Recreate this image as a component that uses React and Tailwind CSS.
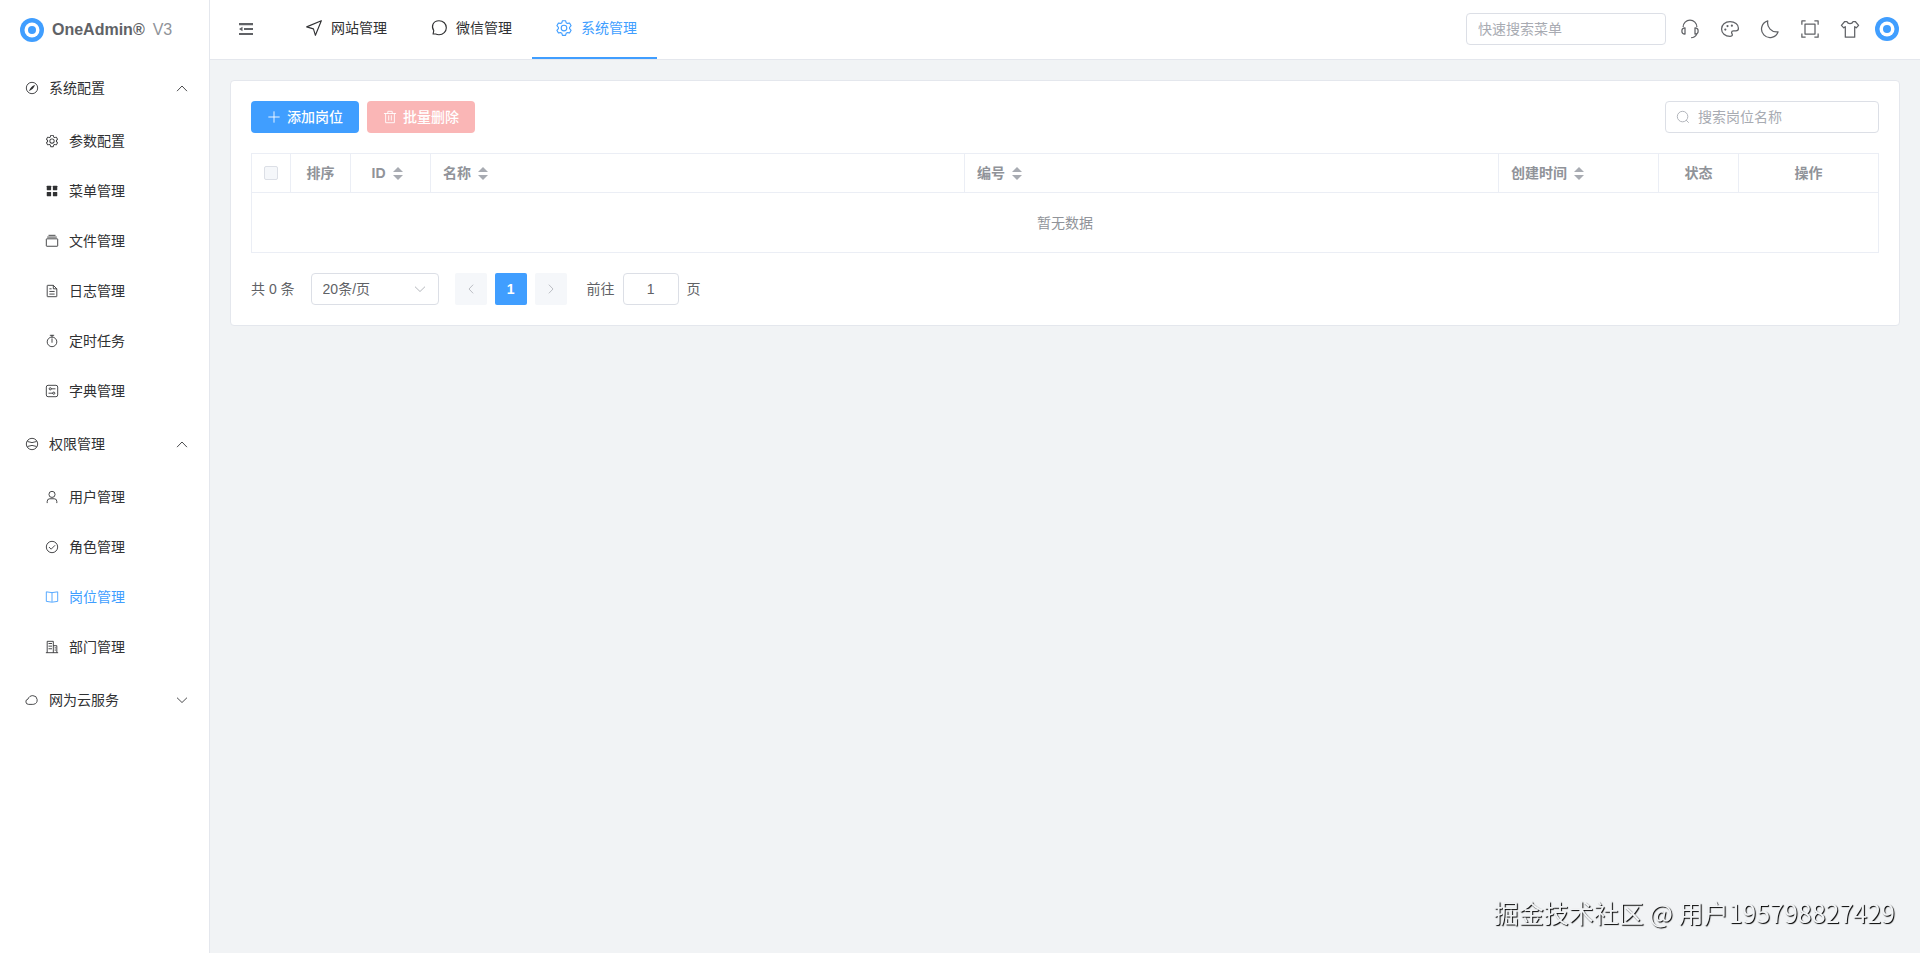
import { useState } from 'react';

function Icon({ className = 'size-3.5', children }) {
  return (
    <svg
      viewBox="0 0 1024 1024"
      className={`shrink-0 ${className}`}
      fill="none"
      stroke="currentColor"
      strokeWidth="64"
      strokeLinejoin="round"
      aria-hidden="true"
    >
      {children}
    </svg>
  );
}

const icons = {
  compass: (
    <>
      <circle cx="512" cy="512" r="416" />
      <path
        fill="currentColor"
        stroke="none"
        d="M725.9 315C676.5 428.7 624 513.3 568.6 568.6c-55.4 55.4-140 107.9-253.6 157.3a12.8 12.8 0 0 1-16.9-16.8c49.5-113.7 102-198.3 157.3-253.6 55.4-55.3 139.9-107.8 253.6-157.3a12.8 12.8 0 0 1 16.9 16.8z"
      />
    </>
  ),
  setting: (
    <path
      fill="currentColor"
      stroke="none"
      d="M600.704 64a32 32 0 0 1 30.464 22.208l35.2 109.376c14.784 7.232 28.928 15.36 42.432 24.512l112.384-24.192a32 32 0 0 1 34.432 15.36L944.32 364.8a32 32 0 0 1-4.032 37.504l-77.12 85.12a357.12 357.12 0 0 1 0 49.024l77.12 85.248a32 32 0 0 1 4.032 37.504l-88.704 153.6a32 32 0 0 1-34.432 15.296L708.8 803.904c-13.44 9.088-27.648 17.28-42.368 24.512l-35.264 109.376A32 32 0 0 1 600.704 960H423.296a32 32 0 0 1-30.464-22.208L357.696 828.48a351.616 351.616 0 0 1-42.56-24.64l-112.32 24.256a32 32 0 0 1-34.432-15.36L79.68 659.2a32 32 0 0 1 4.032-37.504l77.12-85.248a357.12 357.12 0 0 1 0-48.896l-77.12-85.248A32 32 0 0 1 79.68 364.8l88.704-153.6a32 32 0 0 1 34.432-15.296l112.32 24.256c13.568-9.152 27.776-17.408 42.56-24.64l35.2-109.312A32 32 0 0 1 423.232 64H600.64zm-23.424 64H446.72l-36.352 113.088-24.512 11.968a294.113 294.113 0 0 0-34.816 20.096l-22.656 15.36-116.224-25.088-65.28 113.152 79.68 88.192-1.92 27.136a293.12 293.12 0 0 0 0 40.192l1.92 27.136-79.808 88.192 65.344 113.152 116.224-25.024 22.656 15.296a294.113 294.113 0 0 0 34.816 20.096l24.512 11.968L446.72 896h130.688l36.48-113.152 24.448-11.904a288.282 288.282 0 0 0 34.752-20.096l22.592-15.296 116.288 25.024 65.28-113.152-79.744-88.192 1.92-27.136a293.12 293.12 0 0 0 0-40.256l-1.92-27.136 79.808-88.128-65.344-113.152-116.288 24.96-22.592-15.232a287.616 287.616 0 0 0-34.752-20.096l-24.448-11.904L577.344 128zM512 320a192 192 0 1 1 0 384 192 192 0 0 1 0-384zm0 64a128 128 0 1 0 0 256 128 128 0 0 0 0-256z"
    />
  ),
  menu: (
    <g fill="currentColor" stroke="none">
      <rect x="128" y="128" width="320" height="320" rx="32" />
      <rect x="576" y="128" width="320" height="320" rx="32" />
      <rect x="128" y="576" width="320" height="320" rx="32" />
      <rect x="576" y="576" width="320" height="320" rx="32" />
    </g>
  ),
  files: (
    <>
      <rect x="96" y="352" width="832" height="544" rx="32" />
      <path d="M160 224h704M256 96h512" />
    </>
  ),
  document: (
    <>
      <path d="M608 96H192a32 32 0 0 0-32 32v768a32 32 0 0 0 32 32h640a32 32 0 0 0 32-32V352z" />
      <path d="M608 96v256h256M320 352h160M320 544h384M320 736h384" />
    </>
  ),
  timer: (
    <>
      <circle cx="512" cy="576" r="352" />
      <path d="M512 352v256M384 96h256M512 96v128" strokeLinecap="round" />
    </>
  ),
  setUp: (
    <>
      <rect x="96" y="96" width="832" height="832" rx="128" />
      <circle cx="384" cy="352" r="80" />
      <circle cx="640" cy="672" r="80" />
      <path d="M480 352h256M288 672h256" strokeLinecap="round" />
    </>
  ),
  baseball: (
    <>
      <circle cx="512" cy="512" r="416" />
      <path d="M176 330q336 160 672 0M176 694q336-160 672 0" />
    </>
  ),
  user: (
    <>
      <circle cx="512" cy="320" r="224" />
      <path d="M160 928v-96a192 192 0 0 1 192-192h320a192 192 0 0 1 192 192v96" strokeLinecap="round" />
    </>
  ),
  check: (
    <>
      <circle cx="512" cy="512" r="416" />
      <path d="M288 512l160 160 288-288" />
    </>
  ),
  reading: (
    <path d="M512 864V192M512 192L96 134v698l416 58 416-58V134z" />
  ),
  building: (
    <path d="M160 928V96h448v832M608 416h256v512M64 928h896M256 256h256M256 448h256M256 640h256M704 576h96M704 736h96" />
  ),
  cloud: (
    <path d="M260 832a196 196 0 0 1-40-388C260 300 400 192 570 192a320 320 0 0 1 70 632c-20 6-50 8-70 8z" />
  ),
  promotion: <path d="M96 448L928 96 592 928 480 560z" />,
  chat: (
    <path d="M174 855l40-190C60 440 150 96 512 96c240 0 416 180 416 400S752 896 512 896c-70 0-130-12-190-40z" />
  ),
  headset: (
    <>
      <path d="M864 410a352 352 0 0 0-704 0M864 768a352 352 0 0 1-300 192" />
      <path d="M256 448c-107 0-160 60-160 160s53 160 160 160zM768 448c107 0 160 60 160 160s-53 160-160 160z" />
    </>
  ),
  palette: (
    <>
      <path d="M944 470C944 280 760 140 512 140S80 300 80 512s184 372 432 372c70 0 120-26 120-76 0-54-40-66-40-118 0-46 40-84 100-84h120c82 0 132-46 132-136z" />
      <g fill="currentColor" stroke="none">
        <circle cx="272" cy="540" r="56" />
        <circle cx="384" cy="360" r="56" />
        <circle cx="608" cy="340" r="56" />
      </g>
    </>
  ),
  moon: (
    <path d="M400 96a464 464 0 0 0 528 560A436 436 0 1 1 400 96z" />
  ),
  fullScreen: (
    <>
      <path d="M96 288V96h192M736 96h192v192M928 736v192H736M288 928H96V736" />
      <rect x="256" y="256" width="512" height="512" />
    </>
  ),
  shirt: (
    <path d="M352 128c30 80 90 112 160 112s130-32 160-112h110l170 196-120 130-80-60v534H272V394l-80 60L72 324l170-196z" />
  ),
  plus: <path d="M512 128v768M128 512h768" strokeLinecap="round" />,
  trash: (
    <path d="M96 256h832M352 256V96h320v160M192 256v672h640V256M416 416v320M608 416v320" strokeLinecap="round" />
  ),
  search: (
    <>
      <circle cx="480" cy="480" r="384" />
      <path d="M752 752l160 160" strokeLinecap="round" />
    </>
  ),
  up: <path d="M168 722l344-356 344 356" strokeLinecap="round" />,
  down: <path d="M168 362l344 334 344-334" strokeLinecap="round" />,
  left: <path d="M672 168L340 512l332 344" strokeLinecap="round" />,
  right: <path d="M352 168l332 344-332 344" strokeLinecap="round" />,
  fold: (
    <g fill="currentColor" stroke="none">
      <path d="M64 128h896v136H64zM384 444h576v136H384zM64 760h896v136H64zM64 512l224-150v300z" />
    </g>
  ),
};

const menus = [
  {
    title: '系统配置',
    icon: 'compass',
    children: [
      { title: '参数配置', icon: 'setting' },
      { title: '菜单管理', icon: 'menu' },
      { title: '文件管理', icon: 'files' },
      { title: '日志管理', icon: 'document' },
      { title: '定时任务', icon: 'timer' },
      { title: '字典管理', icon: 'setUp' },
    ],
  },
  {
    title: '权限管理',
    icon: 'baseball',
    children: [
      { title: '用户管理', icon: 'user' },
      { title: '角色管理', icon: 'check' },
      { title: '岗位管理', icon: 'reading' },
      { title: '部门管理', icon: 'building' },
    ],
  },
  { title: '网为云服务', icon: 'cloud', children: [] },
];

const tabs = [
  { title: '网站管理', icon: 'promotion' },
  { title: '微信管理', icon: 'chat' },
  { title: '系统管理', icon: 'setting' },
];

const tools = [
  { title: '客服', icon: 'headset' },
  { title: '主题', icon: 'palette' },
  { title: '暗黑模式', icon: 'moon' },
  { title: '全屏', icon: 'fullScreen' },
  { title: '换肤', icon: 'shirt' },
];

const columns = [
  { title: '排序', width: 'w-[60px]', center: true },
  { title: 'ID', width: 'w-20', center: true, sortable: true },
  { title: '名称', sortable: true },
  { title: '编号', sortable: true },
  { title: '创建时间', width: 'w-40', sortable: true },
  { title: '状态', width: 'w-20', center: true },
  { title: '操作', width: 'w-[140px]', center: true },
];

function Logo() {
  return (
    <svg viewBox="0 0 24 24" className="size-6 shrink-0" aria-hidden="true">
      <circle cx="12" cy="12" r="12" fill="#409eff" />
      <circle cx="12" cy="12" r="7.5" fill="#fff" />
      <circle cx="12" cy="12" r="4" fill="#409eff" />
    </svg>
  );
}

function Sidebar() {
  const [active, setActive] = useState('岗位管理');
  const [open, setOpen] = useState(['系统配置', '权限管理']);

  const toggle = (title) =>
    setOpen(open.includes(title) ? open.filter((t) => t !== title) : [...open, title]);

  return (
    <aside className="w-[210px] shrink-0 border-r border-[#e4e7ed] bg-white">
      <div className="flex h-[60px] items-center pl-5 text-base">
        <Logo />
        <span className="ml-2 font-bold text-[#606266]">OneAdmin®</span>
        <span className="ml-2 text-[#909399]">V3</span>
      </div>
      <nav>
        {menus.map((group) => (
          <div key={group.title}>
            <button
              type="button"
              onClick={() => toggle(group.title)}
              className="flex h-14 w-full items-center pl-[25px] pr-5"
            >
              <Icon>{icons[group.icon]}</Icon>
              <span className="ml-2.5">{group.title}</span>
              <Icon className="ml-auto size-3.5">
                {open.includes(group.title) ? icons.up : icons.down}
              </Icon>
            </button>
            {open.includes(group.title) &&
              group.children.map((item) => (
                <a
                  key={item.title}
                  href="#"
                  onClick={() => setActive(item.title)}
                  className={`flex h-[50px] items-center pl-[45px] ${
                    active === item.title ? 'text-[#409eff]' : ''
                  }`}
                >
                  <Icon>{icons[item.icon]}</Icon>
                  <span className="ml-2.5">{item.title}</span>
                </a>
              ))}
          </div>
        ))}
      </nav>
    </aside>
  );
}

function Header() {
  const [active, setActive] = useState('系统管理');

  return (
    <header className="flex h-[60px] border-b border-[#e4e7ed] bg-white pr-[21px]">
      <button
        type="button"
        aria-label="折叠菜单"
        className="flex w-[72px] items-center justify-center pb-px text-[#606266]"
      >
        <Icon className="size-4">{icons.fold}</Icon>
      </button>
      <nav className="flex">
        {tabs.map((tab) => (
          <a
            key={tab.title}
            href="#"
            onClick={() => setActive(tab.title)}
            className={`flex items-center border-b-2 px-5 pb-px ${
              active === tab.title ? 'border-[#409eff] text-[#409eff]' : 'border-transparent'
            }`}
          >
            <span className="mr-[5px] flex w-6 justify-center">
              <Icon className="size-[18px]">{icons[tab.icon]}</Icon>
            </span>
            {tab.title}
          </a>
        ))}
      </nav>
      <div className="ml-auto flex items-center pb-px">
        <input
          type="text"
          aria-label="快速搜索菜单"
          placeholder="快速搜索菜单"
          className="mr-1 h-8 w-[200px] rounded border border-[#dcdfe6] px-[11px] outline-none placeholder:text-[#a8abb2]"
        />
        {tools.map((tool) => (
          <button
            key={tool.title}
            type="button"
            aria-label={tool.title}
            className="flex h-full w-10 items-center justify-center text-[#606266]"
          >
            <Icon className="size-5">{icons[tool.icon]}</Icon>
          </button>
        ))}
        <button type="button" aria-label="个人中心" className="ml-[5px]">
          <Logo />
        </button>
      </div>
    </header>
  );
}

function SortCaret() {
  return (
    <span className="flex w-6 flex-col items-center gap-[3px]">
      <svg viewBox="0 0 10 5" className="h-[5px] w-2.5" fill="#a8abb2" aria-hidden="true">
        <path d="M5 0l5 5H0z" />
      </svg>
      <svg viewBox="0 0 10 5" className="h-[5px] w-2.5" fill="#a8abb2" aria-hidden="true">
        <path d="M0 0h10L5 5z" />
      </svg>
    </span>
  );
}

function PostTable() {
  return (
    <table className="mt-5 w-full table-fixed border-separate border-spacing-0 text-[#909399]">
      <thead>
        <tr className="h-10">
          <th className="w-10 border border-[#ebeef5] p-0">
            <input
              type="checkbox"
              aria-label="全选"
              disabled
              className="mx-auto block size-3.5 appearance-none rounded-xs border border-[#dcdfe6] bg-[#f5f7fa]"
            />
          </th>
          {columns.map((col) => (
            <th
              key={col.title}
              className={`border-y border-r border-[#ebeef5] px-3 py-0 font-bold ${col.width || ''}`}
            >
              <div className={`flex items-center ${col.center ? 'justify-center' : ''}`}>
                {col.title}
                {col.sortable && <SortCaret />}
              </div>
            </th>
          ))}
        </tr>
      </thead>
      <tbody>
        <tr className="h-[60px]">
          <td colSpan={8} className="border-x border-b border-[#ebeef5] p-0 text-center">
            暂无数据
          </td>
        </tr>
      </tbody>
    </table>
  );
}

function Pagination() {
  return (
    <div className="mt-5 flex items-center text-[#606266]">
      <span className="mr-4">共 0 条</span>
      <div className="relative mr-4">
        <select
          aria-label="每页条数"
          defaultValue="20"
          className="block h-8 w-32 appearance-none rounded border border-[#dcdfe6] bg-white px-[11px] outline-none"
        >
          <option value="20">20条/页</option>
          <option value="50">50条/页</option>
          <option value="100">100条/页</option>
        </select>
        <Icon className="pointer-events-none absolute right-3 top-1/2 size-3.5 -translate-y-1/2 text-[#a8abb2]">
          {icons.down}
        </Icon>
      </div>
      <div className="flex gap-2">
        <button
          type="button"
          disabled
          aria-label="上一页"
          className="flex size-8 items-center justify-center rounded-xs bg-[#f5f7fa] text-[#a8abb2]"
        >
          <Icon className="size-3">{icons.left}</Icon>
        </button>
        <button type="button" className="size-8 rounded-xs bg-[#409eff] font-bold text-white">
          1
        </button>
        <button
          type="button"
          disabled
          aria-label="下一页"
          className="flex size-8 items-center justify-center rounded-xs bg-[#f5f7fa] text-[#a8abb2]"
        >
          <Icon className="size-3">{icons.right}</Icon>
        </button>
      </div>
      <label className="ml-5 flex items-center gap-2">
        前往
        <input
          type="text"
          defaultValue="1"
          className="h-8 w-14 rounded border border-[#dcdfe6] text-center outline-none"
        />
        页
      </label>
    </div>
  );
}

export default function App() {
  return (
    <div className="flex min-h-screen bg-[#f1f3f5] font-['Liberation_Sans','Noto_Sans_CJK_SC',sans-serif] text-sm text-[#303133]">
      <Sidebar />
      <div className="min-w-0 flex-1">
        <Header />
        <main className="p-5">
          <section className="rounded border border-[#e4e7ed] bg-white p-5">
            <div className="flex items-center gap-2">
              <button
                type="button"
                className="flex h-8 items-center gap-1.5 rounded bg-[#409eff] px-4 font-medium text-white"
              >
                <Icon>{icons.plus}</Icon>
                添加岗位
              </button>
              <button
                type="button"
                disabled
                className="flex h-8 items-center gap-1.5 rounded bg-[#fab6b6] px-4 font-medium text-white"
              >
                <Icon>{icons.trash}</Icon>
                批量删除
              </button>
              <label className="ml-auto flex h-8 w-[214px] items-center gap-2 rounded border border-[#dcdfe6] px-2.5 text-[#a8abb2]">
                <Icon>{icons.search}</Icon>
                <input
                  type="text"
                  aria-label="搜索岗位名称"
                  placeholder="搜索岗位名称"
                  className="min-w-0 flex-1 text-[#606266] outline-none placeholder:text-[#a8abb2]"
                />
              </label>
            </div>
            <PostTable />
            <Pagination />
          </section>
        </main>
      </div>
      <p className="fixed bottom-[22px] right-[25px] font-['Noto_Sans_CJK_SC',sans-serif] text-[25px] text-[#f1f3f5] [text-shadow:1px_1px_1px_#000]">
        掘金技术社区 @ 用户195798827429
      </p>
    </div>
  );
}
